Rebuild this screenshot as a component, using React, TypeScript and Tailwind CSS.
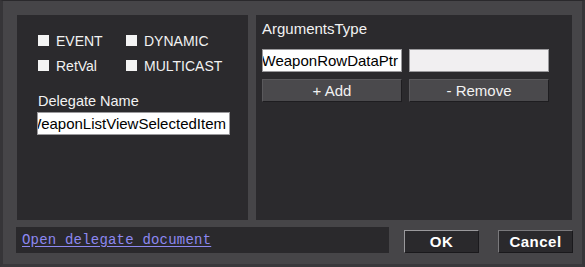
import React from 'react';

const sans = { fontFamily: '"Liberation Sans", Arial, sans-serif' };
const mono = { fontFamily: '"Liberation Mono", "Courier New", monospace' };

const Check: React.FC<{ label: string }> = ({ label }) => (
    <div className="flex items-center h-[25px]">
        <div className="w-[11px] h-[11px] bg-[#f4f4f4] mr-[7px]" />
        <span className="text-[14px] text-[#f2f2f2] leading-none">{label}</span>
    </div>
);

const TextField: React.FC<{ value: string; className?: string }> = ({ value, className = '' }) => (
    <div className={`h-[23px] bg-white border border-[#9a999c] flex justify-end items-center overflow-hidden whitespace-nowrap ${className}`}>
        <span className="text-[15px] text-black pr-[3px] leading-none">{value}</span>
    </div>
);

const PanelButton: React.FC<{ label: string }> = ({ label }) => (
    <button className="w-[140px] h-[23px] bg-[#4a494c] border border-t-[#5a595c] border-l-[#5a595c] border-r-[#1e1d20] border-b-[#1e1d20] text-[15px] text-[#f2f2f2] leading-none">
        {label}
    </button>
);

export default function App() {
    return (
        <div
            className="w-[585px] h-[267px] bg-[#464548] border-t border-t-[#2a292c] border-l-[3px] border-l-[#363538] border-r-[3px] border-r-[#363538] border-b-[3px] border-b-[#39383b] flex flex-col pt-[14px] pl-[14px]"
            style={sans}
        >
            <div className="flex gap-[8px]">
                {/* left panel */}
                <div className="w-[231px] h-[205px] bg-[#2b2a2d] pl-[21px] pt-[13px]">
                    <div className="grid grid-cols-[88px_1fr]">
                        <Check label="EVENT" />
                        <Check label="DYNAMIC" />
                        <Check label="RetVal" />
                        <Check label="MULTICAST" />
                    </div>
                    <div className="mt-[16px] text-[14.5px] text-[#f2f2f2] leading-none">Delegate Name</div>
                    <TextField value="OnWeaponListViewSelectedItem" className="mt-[3px] w-[193px] -ml-[1px]" />
                </div>

                {/* right panel */}
                <div className="w-[316px] h-[205px] bg-[#2b2a2d] pl-[6px] pt-[6px]">
                    <div className="text-[15px] text-[#f2f2f2] leading-none">ArgumentsType</div>
                    <div className="flex gap-[7px] mt-[13px]">
                        <TextField value="FWeaponRowDataPtr" className="w-[140px]" />
                        <div className="w-[140px] h-[23px] bg-[#f1eff1] border border-[#9a999c]" />
                    </div>
                    <div className="flex gap-[7px] mt-[7px]">
                        <PanelButton label="+ Add" />
                        <PanelButton label="- Remove" />
                    </div>
                </div>
            </div>

            {/* bottom bar */}
            <div className="flex items-start mt-[7px]">
                <div className="w-[373px] h-[26px] bg-[#2a292c] -ml-[1px] flex items-center pl-[6px]">
                    <a className="text-[14px] text-[#8d88f0] underline underline-offset-2 tracking-[0.2px]" style={mono}>
                        Open delegate document
                    </a>
                </div>
                <button className="ml-[15px] mt-[3px] w-[75px] h-[23px] bg-[#2a292c] border border-t-[#9a999c] border-l-[#9a999c] border-r-[#1a191c] border-b-[#1a191c] text-[15px] font-bold text-white tracking-[0.5px] leading-none">
                    OK
                </button>
                <button className="ml-[19px] mt-[3px] w-[75px] h-[23px] bg-[#2a292c] border border-t-[#7a797c] border-l-[#7a797c] border-r-[#1a191c] border-b-[#1a191c] text-[15px] font-bold text-white tracking-[0.5px] leading-none">
                    Cancel
                </button>
            </div>
        </div>
    );
}
